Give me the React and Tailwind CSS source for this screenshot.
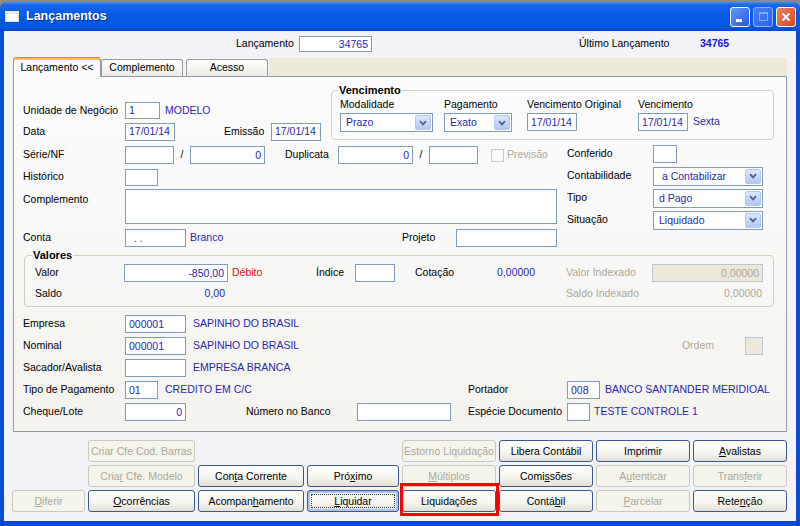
import React from 'react';

const Field = ({ className = '', right = false, disabled = false, children }) => (
  <div
    className={`flex shrink-0 items-center overflow-hidden whitespace-nowrap border px-[3px] leading-none ${
      disabled ? 'border-[#b9c5d6] bg-[#ece9d8] text-[#aca899]' : 'border-[#7f9db9] bg-white text-[#2828b0]'
    } ${right ? 'justify-end' : 'justify-start'} ${className}`}
  >
    {children}
  </div>
);

const Combo = ({ className = '', children }) => (
  <div className={`flex shrink-0 items-stretch border border-[#7f9db9] bg-white p-[1px] ${className}`}>
    <span className="flex flex-1 items-center whitespace-nowrap pl-[4px] leading-none text-[#2828b0]">{children}</span>
    <span className="flex w-[16px] items-center justify-center rounded-[2px] border border-[#b5c7f0] bg-[linear-gradient(180deg,#dbe6fe,#b2c6f6)]">
      <svg width="8" height="6" viewBox="0 0 8 6">
        <path d="M1 1.2 L4 4.4 L7 1.2" stroke="#4d6185" strokeWidth="1.7" fill="none" />
      </svg>
    </span>
  </div>
);

const Btn = ({ children, disabled, focused }) => (
  <div
    className={`relative flex h-[22px] items-center justify-center whitespace-nowrap rounded-[3px] border leading-none ${
      disabled
        ? 'border-[#c9c7ba] bg-[#f5f4ea] text-[#aca899]'
        : 'border-[#38588f] bg-[linear-gradient(180deg,#ffffff_0%,#f5f4ef_60%,#e3e0d5_100%)] text-black'
    } ${focused ? 'shadow-[inset_0_0_0_2px_#a8c4ee]' : ''}`}
  >
    {focused && <span className="absolute inset-[3px] border border-dotted border-[#333]" />}
    <span className="relative">{children}</span>
  </div>
);

const Row = ({ className = '', children }) => (
  <div className={`flex h-[22px] items-center whitespace-nowrap ${className}`}>{children}</div>
);

const blue = 'text-[#2828b0]';
const gray = 'text-[#aca899]';

export default function App() {
  return (
    <div className="h-[526px] w-[800px] overflow-hidden bg-[#8a8a8a] pt-[2px] font-['Liberation_Sans',Arial,sans-serif] text-[10.5px] text-black">
      <div className="flex h-[524px] flex-col overflow-hidden rounded-t-[7px] bg-[#0a49d6]">
        {/* barra de titulo */}
        <div className="flex h-[29px] shrink-0 items-center bg-[linear-gradient(180deg,#3f8ef6_0%,#1667ec_10%,#055ae6_45%,#0558e3_85%,#0245cc_100%)] pl-[5px] pr-[4px]">
          <div className="h-[11px] w-[14px] border border-[#cfd8ee] border-t-[3px] border-t-[#e8ecf7] bg-white" />
          <span className="ml-[7px] text-[12.5px] font-bold text-white [text-shadow:1px_1px_0_#0a2c8a]">Lançamentos</span>
          <div className="ml-auto flex gap-[3px]">
            <div className="flex h-[20px] w-[20px] items-end rounded-[3px] border border-white bg-[linear-gradient(135deg,#6a9bfa,#2258e4)] pb-[4px] pl-[5px]">
              <div className="h-[3px] w-[6px] bg-white" />
            </div>
            <div className="flex h-[20px] w-[20px] items-center justify-center rounded-[3px] border border-[#8eb0f6] bg-[linear-gradient(135deg,#4b82f2,#2a61e6)]">
              <div className="h-[9px] w-[9px] border border-[#86a7f3] border-t-2" />
            </div>
            <div className="flex h-[20px] w-[20px] items-center justify-center rounded-[3px] border border-white bg-[linear-gradient(135deg,#ec8464,#d4471f)]">
              <svg width="10" height="10" viewBox="0 0 10 10">
                <path d="M1.5 1.5 L8.5 8.5 M8.5 1.5 L1.5 8.5" stroke="white" strokeWidth="2" />
              </svg>
            </div>
          </div>
        </div>

        {/* moldura + area cliente */}
        <div className="flex flex-1 px-[4px] pb-[5px]">
          <div className="flex flex-1 flex-col bg-[#f3f3f7]">
            {/* cabecalho */}
            <div className="flex h-[26px] shrink-0 items-center pl-[232px]">
              <span className="w-[63px]">Lançamento</span>
              <Field right className="h-[16px] w-[73px]">34765</Field>
              <span className="ml-[207px] w-[121px]">Último Lançamento</span>
              <span className="font-bold text-[#1616e8]">34765</span>
            </div>

            {/* abas */}
            <div className="mx-[9px] flex h-[19px] shrink-0 items-end">
              <div className="relative z-10 mb-[-1px] flex h-[20px] w-[88px] items-center justify-center rounded-t-[3px] border border-b-0 border-[#919b9c] border-t-[#e68b2c] bg-[#fcfcfe] shadow-[inset_0_2px_0_#ffc73c]">
                Lançamento &lt;&lt;
              </div>
              <div className="flex h-[17px] w-[82px] items-center justify-center rounded-t-[3px] border border-b-0 border-[#919b9c] bg-[linear-gradient(180deg,#ffffff,#ecebe5)]">
                Complemento
              </div>
              <div className="ml-[3px] flex h-[17px] w-[82px] items-center justify-center rounded-t-[3px] border border-b-0 border-[#919b9c] bg-[linear-gradient(180deg,#ffffff,#ecebe5)]">
                Acesso
              </div>
              <div className="ml-[1px] h-[18px] flex-1 bg-[#ece9d8]" />
            </div>

            {/* painel */}
            <div className="mx-[9px] h-[356px] shrink-0 border border-[#919b9c] bg-[linear-gradient(180deg,#fcfcfe,#f4f3ee)]">
              {/* topo */}
              <div className="flex h-[67px]">
                <div className="w-[317px] shrink-0 pl-[9px] pt-[23px]">
                  <div className="flex h-[21px] items-center">
                    <span className="w-[102px] shrink-0">Unidade de Negócio</span>
                    <Field className="h-[17px] w-[35px]">1</Field>
                    <span className={`ml-[5px] ${blue}`}>MODELO</span>
                  </div>
                  <div className="flex h-[21px] items-center">
                    <span className="w-[102px] shrink-0">Data</span>
                    <Field className="h-[18px] w-[50px]">17/01/14</Field>
                    <span className="ml-[49px] w-[47px]">Emissão</span>
                    <Field className="h-[18px] w-[50px]">17/01/14</Field>
                  </div>
                </div>
                <fieldset className="mt-[7px] w-[443px] self-start rounded-[4px] border border-[#d0d0bf] pb-[7px] pl-[8px]">
                  <legend className="ml-[-2px] px-[1px] text-[11px] font-bold leading-[13px]">Vencimento</legend>
                  <div className="flex items-start">
                    <div className="flex w-[93px] flex-col">
                      <span className="h-[15px] leading-[15px]">Modalidade</span>
                      <Combo className="mt-[1px] h-[19px] w-[93px]">Prazo</Combo>
                    </div>
                    <div className="ml-[11px] flex w-[68px] flex-col">
                      <span className="h-[15px] leading-[15px]">Pagamento</span>
                      <Combo className="mt-[1px] h-[19px] w-[68px]">Exato</Combo>
                    </div>
                    <div className="ml-[15px] flex w-[111px] flex-col">
                      <span className="h-[15px] leading-[15px]">Vencimento Original</span>
                      <Field className="mt-[1px] h-[18px] w-[50px]">17/01/14</Field>
                    </div>
                    <div className="flex flex-col">
                      <span className="h-[15px] leading-[15px]">Vencimento</span>
                      <div className="mt-[1px] flex items-center">
                        <Field className="h-[18px] w-[50px]">17/01/14</Field>
                        <span className={`ml-[5px] ${blue}`}>Sexta</span>
                      </div>
                    </div>
                  </div>
                </fieldset>
              </div>

              {/* meio */}
              <div className="flex">
                <div className="w-[553px] shrink-0 pl-[9px]">
                  <Row>
                    <span className="w-[102px] shrink-0">Série/NF</span>
                    <Field className="h-[18px] w-[49px]" />
                    <span className="w-[16px] text-center">/</span>
                    <Field right className="h-[18px] w-[75px]">0</Field>
                    <span className="ml-[20px] w-[53px]">Duplicata</span>
                    <Field right className="h-[18px] w-[75px]">0</Field>
                    <span className="w-[16px] text-center">/</span>
                    <Field className="h-[18px] w-[49px]" />
                    <span className="ml-[13px] h-[13px] w-[13px] border border-[#cac8bb] bg-[#fbfbf8]" />
                    <span className={`ml-[3px] ${gray}`}>Previsão</span>
                  </Row>
                  <Row>
                    <span className="w-[102px] shrink-0">Histórico</span>
                    <Field className="h-[17px] w-[33px]" />
                  </Row>
                  <div className="flex h-[39px] items-start">
                    <span className="mt-[4px] w-[102px] shrink-0">Complemento</span>
                    <Field className="mt-[1px] h-[35px] w-[432px]" />
                  </div>
                  <Row>
                    <span className="w-[102px] shrink-0">Conta</span>
                    <Field className="h-[18px] w-[61px] pl-[8px]">. .</Field>
                    <span className={`w-[216px] pl-[4px] ${blue}`}>Branco</span>
                    <span className="w-[54px]">Projeto</span>
                    <Field className="h-[18px] w-[101px]" />
                  </Row>
                </div>
                <div className="mt-[-1px] flex-1">
                  <Row>
                    <span className="w-[86px] shrink-0">Conferido</span>
                    <Field className="h-[18px] w-[24px]" />
                  </Row>
                  <Row>
                    <span className="w-[86px] shrink-0">Contabilidade</span>
                    <Combo className="h-[19px] w-[110px]">&nbsp;a Contabilizar</Combo>
                  </Row>
                  <Row>
                    <span className="w-[86px] shrink-0">Tipo</span>
                    <Combo className="h-[19px] w-[110px]">d Pago</Combo>
                  </Row>
                  <Row>
                    <span className="w-[86px] shrink-0">Situação</span>
                    <Combo className="h-[19px] w-[110px]">Liquidado</Combo>
                  </Row>
                </div>
              </div>

              {/* valores */}
              <fieldset className="ml-[10px] mr-[12px] rounded-[4px] border border-[#d0d0bf] pb-[2px] pl-[10px]">
                <legend className="ml-[-3px] px-[1px] text-[11px] font-bold leading-[13px]">Valores</legend>
                <Row>
                  <span className="w-[89px] shrink-0">Valor</span>
                  <Field right className="h-[18px] w-[104px]">-850,00</Field>
                  <span className="w-[88px] pl-[4px] text-[#e41010]">Débito</span>
                  <span className="w-[39px]">Índice</span>
                  <Field className="h-[18px] w-[40px]" />
                  <span className="ml-[20px] w-[60px]">Cotação</span>
                  <span className={`w-[60px] text-right ${blue}`}>0,00000</span>
                  <span className={`ml-[31px] w-[86px] ${gray}`}>Valor Indexado</span>
                  <Field right disabled className="h-[18px] w-[111px]">0,00000</Field>
                </Row>
                <div className="flex h-[20px] items-center whitespace-nowrap">
                  <span className="w-[89px] shrink-0">Saldo</span>
                  <span className={`w-[104px] pr-[3px] text-right ${blue}`}>0,00</span>
                  <span className="w-[338px]" />
                  <span className={`w-[86px] ${gray}`}>Saldo Indexado</span>
                  <span className={`w-[111px] pr-[1px] text-right ${gray}`}>0,00000</span>
                </div>
              </fieldset>

              {/* empresa etc */}
              <div className="mt-[6px] pl-[9px]">
                <Row>
                  <span className="w-[102px] shrink-0">Empresa</span>
                  <Field className="h-[18px] w-[61px]">000001</Field>
                  <span className={`ml-[7px] ${blue}`}>SAPINHO DO BRASIL</span>
                </Row>
                <Row>
                  <span className="w-[102px] shrink-0">Nominal</span>
                  <Field className="h-[18px] w-[61px]">000001</Field>
                  <span className={`ml-[7px] ${blue}`}>SAPINHO DO BRASIL</span>
                  <span className={`ml-auto ${gray}`}>Ordem</span>
                  <Field disabled className="ml-[31px] mr-[23px] h-[18px] w-[18px]" />
                </Row>
                <Row>
                  <span className="w-[102px] shrink-0">Sacador/Avalista</span>
                  <Field className="h-[18px] w-[61px]" />
                  <span className={`ml-[7px] ${blue}`}>EMPRESA BRANCA</span>
                </Row>
                <Row>
                  <div className="flex w-[445px] shrink-0 items-center">
                    <span className="w-[102px] shrink-0">Tipo de Pagamento</span>
                    <Field className="h-[18px] w-[33px]">01</Field>
                    <span className={`ml-[7px] ${blue}`}>CREDITO EM C/C</span>
                  </div>
                  <span className="w-[99px]">Portador</span>
                  <Field className="h-[18px] w-[33px]">008</Field>
                  <span className={`ml-[5px] ${blue}`}>BANCO SANTANDER MERIDIOAL</span>
                </Row>
                <Row>
                  <div className="flex w-[445px] shrink-0 items-center">
                    <span className="w-[102px] shrink-0">Cheque/Lote</span>
                    <Field right className="h-[18px] w-[61px]">0</Field>
                    <span className="ml-[60px] w-[111px]">Número no Banco</span>
                    <Field className="h-[18px] w-[94px]" />
                  </div>
                  <span className="w-[99px]">Espécie Documento</span>
                  <Field className="h-[18px] w-[23px]" />
                  <span className={`ml-[4px] ${blue}`}>TESTE CONTROLE 1</span>
                </Row>
              </div>
            </div>

            {/* botoes */}
            <div className="ml-[8px] mt-[8px] grid grid-cols-[73px_107px_106px_92px_94px_94px_94px_94px] gap-[3px]">
              <div />
              <Btn disabled>Criar Cfe Cod. Barras</Btn>
              <div />
              <div />
              <Btn disabled>Estorno Liquidação</Btn>
              <Btn>Libera Contábil</Btn>
              <Btn>Imprimir</Btn>
              <Btn><u>A</u>valistas</Btn>

              <div />
              <Btn disabled>Cria<u>r</u> Cfe. Modelo</Btn>
              <Btn>Con<u>t</u>a Corrente</Btn>
              <Btn>Pró<u>x</u>imo</Btn>
              <Btn disabled><u>M</u>últiplos</Btn>
              <Btn>Comi<u>s</u>sões</Btn>
              <Btn disabled>A<u>u</u>tenticar</Btn>
              <Btn disabled>Trans<u>f</u>erir</Btn>

              <Btn disabled><u>D</u>iferir</Btn>
              <Btn><u>O</u>corrências</Btn>
              <Btn>Acompan<u>h</u>amento</Btn>
              <Btn focused><u>L</u>iquidar</Btn>
              <div className="relative">
                <Btn>Liquidações</Btn>
                <span className="pointer-events-none absolute bottom-[-4px] left-[-2px] right-[-3px] top-[-7px] z-10 border-[3px] border-[#ff0000]" />
              </div>
              <Btn>Contá<u>b</u>il</Btn>
              <Btn disabled><u>P</u>arcelar</Btn>
              <Btn>Rete<u>n</u>ção</Btn>
            </div>
          </div>
        </div>
      </div>
    </div>
  );
}
